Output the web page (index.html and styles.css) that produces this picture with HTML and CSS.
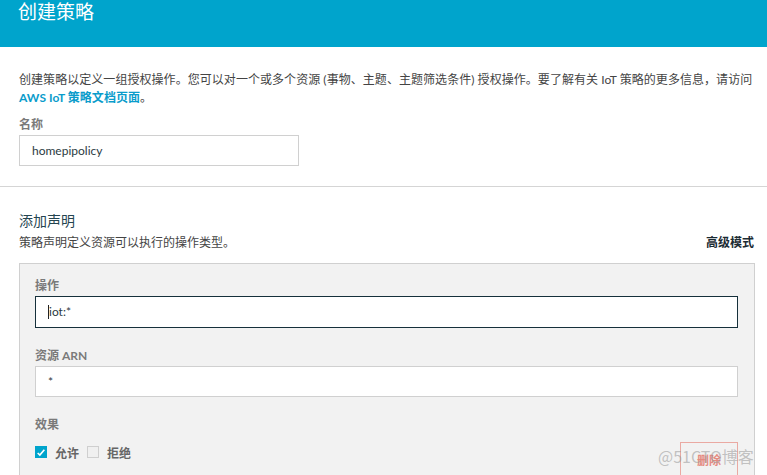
FILE: index.html
```html
<!DOCTYPE html>
<html lang="zh-CN">
<head>
<meta charset="utf-8">
<title>创建策略</title>
<link rel="stylesheet" href="styles.css">
</head>
<body>
<header class="header"><h1 class="title">创建策略</h1></header>
<section class="intro">
  <p class="desc">创建策略以定义一组授权操作。您可以对一个或多个资源 (事物、主题、主题筛选条件) 授权操作。要了解有关 IoT 策略的更多信息，请访问<br><a class="link">AWS IoT 策略文档页面</a>。</p>
  <label class="label name-label">名称</label>
  <div class="input name-input">homepipolicy</div>
</section>
<section class="statement">
  <h2 class="heading">添加声明</h2>
  <div class="subrow">
    <span class="subdesc">策略声明定义资源可以执行的操作类型。</span>
    <a class="advanced">高级模式</a>
  </div>
  <div class="box">
    <label class="label">操作</label>
    <div class="input focused"><span class="caret"></span>iot:*</div>
    <label class="label gap">资源 ARN</label>
    <div class="input">*</div>
    <label class="label gap">效果</label>
    <div class="effect-row">
      <span class="check checked"><svg width="12" height="12" viewBox="0 0 12 12"><path d="M2 7.2 L4.6 9.6 L10 3.2" fill="none" stroke="#fff" stroke-width="2"/></svg></span>
      <span class="opt">允许</span>
      <span class="check"></span>
      <span class="opt">拒绝</span>
      <button class="delete">删除</button>
    </div>
  </div>
</section>
<div class="watermark">@51CTO博客</div>
</body>
</html>
```
FILE: styles.css
```css
* { box-sizing: border-box; }
html, body { margin: 0; padding: 0; }
body {
  width: 767px;
  height: 475px;
  overflow: hidden;
  position: relative;
  background: #fff;
  font-family: "Lato", "Noto Sans CJK SC", sans-serif;
  font-size: 12px;
  color: #444;
}
.header {
  height: 47px;
  background: #00a4cc;
  padding-left: 18px;
  padding-top: 1px;
}
.title {
  margin: 0;
  font-size: 19px;
  line-height: 20px;
  font-weight: 400;
  color: #fff;
  font-family: "Noto Sans CJK SC", sans-serif;
}
.intro {
  padding: 24px 18px 20px 19px;
  border-bottom: 1px solid #d5d5d5;
}
.desc {
  margin: 0;
  line-height: 18px;
  white-space: nowrap;
  color: #444;
  letter-spacing: 0.05px;
}
.link {
  color: #0a9ccb;
  font-weight: 700;
}
.label {
  display: block;
  line-height: 18px;
  color: #7a7a7a;
  font-weight: 700;
  margin-bottom: 1px;
}
.name-label { margin-top: 9px; }
.input {
  height: 31px;
  border: 1px solid #d0d0d0;
  background: #fff;
  padding-left: 12px;
  line-height: 29px;
  color: #2b3a42;
  font-size: 12px;
}
.name-input { width: 280px; }
.statement {
  padding: 24px 13px 0 19px;
}
.heading {
  margin: 0;
  font-size: 14px;
  line-height: 20px;
  font-weight: 400;
  color: #254550;
}
.subrow {
  display: flex;
  justify-content: space-between;
  margin-top: 3px;
  line-height: 18px;
}
.subdesc { color: #444; }
.advanced {
  color: #1b2b33;
  font-weight: 700;
}
.box {
  margin-top: 11px;
  width: 736px;
  height: 220px;
  border: 1px solid #d0d0d0;
  background: #f2f2f2;
  padding: 13px 16px 0 15px;
}
.focused {
  border: 1px solid #16303b;
  height: 32px;
  position: relative;
}
.caret {
  display: inline-block;
  width: 1px;
  height: 14px;
  background: #222;
  vertical-align: middle;
  position: relative;
  top: -1px;
}
.gap { margin-top: 19px; }
.effect-row {
  display: flex;
  align-items: center;
  margin-top: 3px;
  height: 30px;
}
.check {
  width: 12px;
  height: 12px;
  border: 1px solid #cfcfcf;
  background: #f0f0f0;
  display: flex;
  align-items: center;
  justify-content: center;
}
.check.checked {
  background: #00a4cc;
  border-color: #00a4cc;
}
.opt {
  color: #666;
  font-weight: 700;
  margin: 0 8px 0 8px;
}
.delete {
  margin-left: auto;
  width: 58px;
  height: 34px;
  margin-top: 5px;
  border: 1px solid #eaa9a2;
  background: transparent;
  color: #e58a80;
  font-family: "Noto Sans CJK SC", sans-serif;
  font-size: 12px;
  font-weight: 700;
  padding: 0;
  align-self: flex-start;
}
.watermark {
  position: absolute;
  left: 658px;
  top: 446px;
  font-family: "Noto Sans CJK SC", sans-serif;
  font-size: 16px;
  line-height: 20px;
  color: rgba(150, 150, 150, 0.55);
}
```
